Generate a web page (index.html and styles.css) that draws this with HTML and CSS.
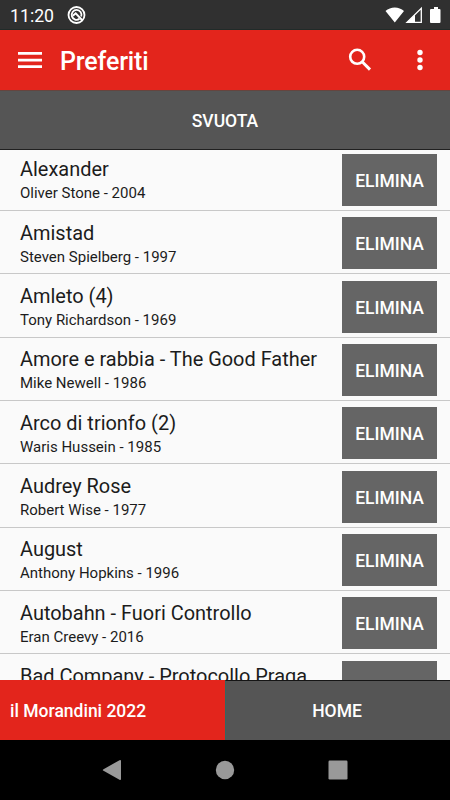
FILE: index.html
```html
<!DOCTYPE html>
<html lang="it">
<head>
<meta charset="utf-8">
<title>Preferiti</title>
<link rel="stylesheet" href="styles.css">
</head>
<body>
<div class="status">
  <span class="clock">11:20</span>
  <svg class="q" width="20" height="20" viewBox="0 0 20 20"><g fill="none" stroke="#fff"><circle cx="9.500" cy="10" r="8" stroke-width="1.800"/><path d="M12.500 13.800A4.900 4.900 0 1 1 14.200 11.500" stroke-width="1.800"/><path d="M5.800 10.800L8.700 8.300L15.500 15.500" stroke-width="2"/></g></svg>
  <svg class="signals" width="58" height="20" viewBox="0 0 58 20"><path fill="#fff" d="M.5 6C5.500 1.300 14 1.300 19 6L9.800 17.500ZM47 4h2V2h4v2h1.500q1 0 1 1v12q0 1-1 1H46q-1 0-1-1V5q0-1 1-1Z"/><path fill="none" stroke="#fff" stroke-width="1.300" d="M22 17.300H36.300V3.400Z"/><path fill="#fff" d="M22 17.300L30 9.500V17.300Z"/></svg>
</div>
<header class="bar">
  <svg class="menu" width="24" height="18" viewBox="0 0 24 18"><path fill="#fff" d="M0 1h24v2.700H0zM0 7.700h24v2.700H0zM0 14.300h24V17H0z"/></svg>
  <h1>Preferiti</h1>
  <svg class="search" width="24" height="24" viewBox="0 0 24 24"><g fill="none" stroke="#fff" stroke-width="2.600"><circle cx="9.200" cy="8.800" r="7"/><path d="M14.200 13.800L22 21.600" stroke-width="3"/></g></svg>
  <svg class="more" width="6" height="22" viewBox="0 0 6 22"><g fill="#fff"><circle cx="3" cy="3.500" r="2.700"/><circle cx="3" cy="11" r="2.700"/><circle cx="3" cy="18.500" r="2.700"/></g></svg>
</header>
<button class="clear">SVUOTA</button>
<main>
<ul>
  <li><div><h2>Alexander</h2><p>Oliver Stone - 2004</p></div><button>ELIMINA</button></li>
  <li><div><h2>Amistad</h2><p>Steven Spielberg - 1997</p></div><button>ELIMINA</button></li>
  <li><div><h2>Amleto (4)</h2><p>Tony Richardson - 1969</p></div><button>ELIMINA</button></li>
  <li><div><h2>Amore e rabbia - The Good Father</h2><p>Mike Newell - 1986</p></div><button>ELIMINA</button></li>
  <li><div><h2>Arco di trionfo (2)</h2><p>Waris Hussein - 1985</p></div><button>ELIMINA</button></li>
  <li><div><h2>Audrey Rose</h2><p>Robert Wise - 1977</p></div><button>ELIMINA</button></li>
  <li><div><h2>August</h2><p>Anthony Hopkins - 1996</p></div><button>ELIMINA</button></li>
  <li><div><h2>Autobahn - Fuori Controllo</h2><p>Eran Creevy - 2016</p></div><button>ELIMINA</button></li>
  <li><div><h2>Bad Company - Protocollo Praga</h2></div><button></button></li>
</ul>
</main>
<footer><span class="brand">il Morandini 2022</span><button class="home">HOME</button></footer>
<nav>
  <svg width="20" height="22" viewBox="0 0 20 22"><path fill="#999" d="M1.500 10.200L17.500 1.200Q19 .6 19 2V20Q19 21.400 17.500 20.800L1.500 11.800Q0 11 1.500 10.200Z"/></svg>
  <svg width="20" height="20" viewBox="0 0 20 20"><circle cx="10" cy="10" r="9.200" fill="#999"/></svg>
  <svg width="20" height="20" viewBox="0 0 20 20"><rect x=".5" y=".5" width="19" height="19" rx="1.200" fill="#999"/></svg>
</nav>
</body>
</html>
```
FILE: styles.css
```css
* { box-sizing: border-box; margin: 0; padding: 0; }
body {
  width: 450px;
  height: 800px;
  display: flex;
  flex-direction: column;
  overflow: hidden;
  background: #fafafa;
  color: #1c1c1c;
  font-family: Roboto, sans-serif;
}
svg { display: block; flex: none; overflow: visible; }
button { border: 0; font: 500 17.5px Roboto, sans-serif; color: #fff; padding-top: 2px; }
.status {
  height: 30px;
  flex: none;
  display: flex;
  align-items: center;
  padding: 0 10px;
  background: #303030;
  border-bottom: 1px solid #202b29;
  color: #fff;
}
.clock { width: 57px; font-size: 17.700px; line-height: 30px; padding-top: 2px; }
.signals { margin-left: auto; margin-right: -3px; }
.bar {
  height: 60px;
  flex: none;
  display: flex;
  align-items: center;
  padding: 0 27px 0 18px;
  background: #e3251c;
  color: #fff;
}
.bar h1 { flex: 1; margin-left: 18px; font-size: 25px; letter-spacing: -.15px; font-weight: 500; line-height: 60px; padding-top: 3px; }
.search { margin-right: -1px; }
.more { margin-left: 46px; }
.clear {
  height: 60px;
  flex: none;
  background: #555;
  border-top: 1px solid #65453f;
  border-bottom: 1px solid #202020;
}
main { height: 530px; overflow: hidden; }
ul { list-style: none; margin-top: -2.500px; }
li {
  height: 63.350px;
  display: flex;
  align-items: flex-start;
  justify-content: space-between;
  padding: 6.500px 13px 0 20px;
  border-bottom: 1.300px solid #c8c8c8;
}
li div { white-space: nowrap; padding-top: 2.200px; }
h2 { font-size: 19.950px; font-weight: 400; line-height: 26px; }
p { font-size: 15px; line-height: 22px; }
li button { width: 95px; height: 52px; flex: none; background: #656565; }
footer { height: 60px; flex: none; display: flex; }
.brand { width: 225px; padding-left: 10px; background: #e3251c; color: #fff; font-size: 17.500px; font-weight: 500; line-height: 62px; }
.home { flex: 1; padding: 0 2px 0 0; background: #555; border-top: 1px solid #151515; border-left: 1px solid #366660; }
nav {
  height: 60px;
  flex: none;
  display: flex;
  align-items: center;
  justify-content: space-between;
  padding: 0 102.500px 0 101.500px;
  background: #000;
}
```
